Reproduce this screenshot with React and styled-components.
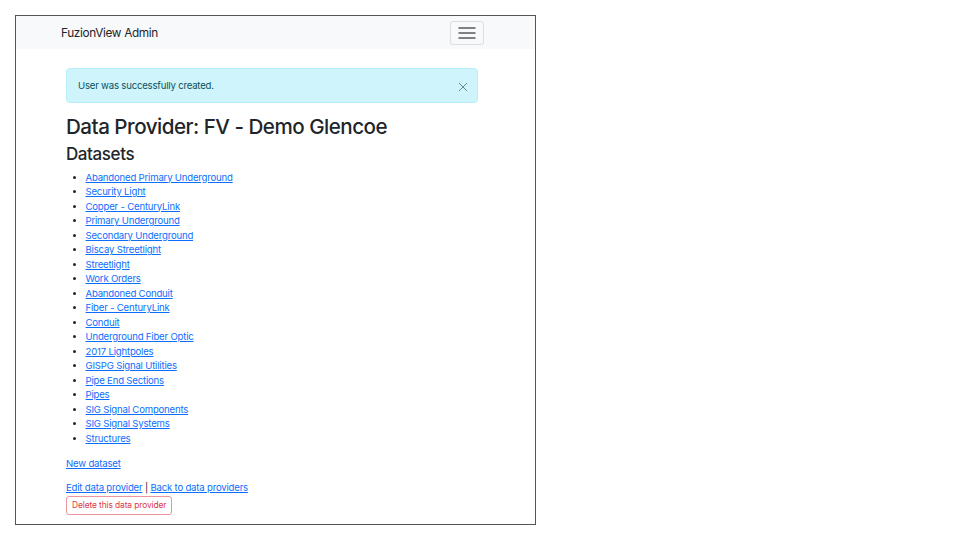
import React from 'react'
import styled, { createGlobalStyle } from 'styled-components'

const GlobalStyle = createGlobalStyle`
  body {
    margin: 0;
    background: #fff;
    font-family: Inter, "Liberation Sans", Arial, sans-serif;
    color: #212529;
  }
`

const Page = styled.div`
  padding: 15px;
`

const Frame = styled.div`
  box-sizing: border-box;
  width: 521px;
  height: 510px;
  border: 1px solid #555;
  overflow: hidden;
`

const Navbar = styled.nav`
  height: 33px;
  background: #f8f9fa;
  display: flex;
  align-items: center;
  justify-content: space-between;
  padding: 0 51px 0 45px;
`

const Brand = styled.span`
  font-size: 11.8px;
  letter-spacing: -0.35px;
  color: #212529;
`

const Toggler = styled.button`
  width: 34px;
  height: 24px;
  border: 1px solid #dcdde0;
  border-radius: 3px;
  background: transparent;
  display: flex;
  align-items: center;
  justify-content: center;
  padding: 0;
`

const Content = styled.main`
  padding: 19px 0 0 50px;
  width: 412px;
  font-size: 9.6px;
  line-height: 14.5px;
  letter-spacing: -0.2px;
`

const Alert = styled.div`
  box-sizing: border-box;
  height: 35px;
  display: flex;
  align-items: center;
  justify-content: space-between;
  padding: 2px 6px 0 11px;
  background: #cff4fc;
  border: 1px solid #b6effb;
  border-radius: 4px;
  color: #055160;
`

const Close = styled.button`
  border: 0;
  background: transparent;
  padding: 0;
  width: 16px;
  height: 16px;
  display: flex;
  align-items: center;
  justify-content: center;
  opacity: 0.45;
`

const Title = styled.h1`
  margin: 11px 0 5px;
  font-size: 20.6px;
  line-height: 25px;
  font-weight: 500;
  letter-spacing: -0.5px;
`

const Subtitle = styled.h2`
  margin: 1px 0 5.5px;
  font-size: 17px;
  line-height: 21px;
  font-weight: 500;
  letter-spacing: -0.4px;
`

const List = styled.ul`
  margin: 0 0 11px;
  padding-left: 19.5px;
`

const Link = styled.a`
  color: #0d6efd;
  text-decoration: underline;
`

const Para = styled.p`
  margin: 0 0 ${p => (p.$last ? 0 : 9.6)}px;
`

const DangerButton = styled.button`
  display: block;
  box-sizing: border-box;
  height: 19px;
  padding: 0 5px;
  font-family: inherit;
  font-size: 8.4px;
  letter-spacing: -0.1px;
  color: #dc3545;
  background: #fff;
  border: 1px solid #eb959d;
  border-radius: 3px;
`

const datasets = [
  'Abandoned Primary Underground',
  'Security Light',
  'Copper - CenturyLink',
  'Primary Underground',
  'Secondary Underground',
  'Biscay Streetlight',
  'Streetlight',
  'Work Orders',
  'Abandoned Conduit',
  'Fiber - CenturyLink',
  'Conduit',
  'Underground Fiber Optic',
  '2017 Lightpoles',
  'GISPG Signal Utilities',
  'Pipe End Sections',
  'Pipes',
  'SIG Signal Components',
  'SIG Signal Systems',
  'Structures',
]

const App = () => (
  <Page>
    <GlobalStyle />
    <Frame>
      <Navbar>
        <Brand>FuzionView Admin</Brand>
        <Toggler aria-label="Toggle navigation">
          <svg width="18" height="14" viewBox="0 0 18 14">
            <path
              d="M1 2h16M1 7h16M1 12h16"
              stroke="rgba(33,37,41,0.75)"
              strokeWidth="1.4"
              strokeLinecap="round"
            />
          </svg>
        </Toggler>
      </Navbar>
      <Content>
        <Alert>
          <span>User was successfully created.</span>
          <Close aria-label="Close">
            <svg width="10" height="10" viewBox="0 0 10 10">
              <path d="M1 1l8 8M9 1l-8 8" stroke="#000" strokeWidth="1" />
            </svg>
          </Close>
        </Alert>
        <Title>Data Provider: FV - Demo Glencoe</Title>
        <Subtitle>Datasets</Subtitle>
        <List>
          {datasets.map(name => (
            <li key={name}>
              <Link href="#">{name}</Link>
            </li>
          ))}
        </List>
        <Para>
          <Link href="#">New dataset</Link>
        </Para>
        <Para $last>
          <Link href="#">Edit data provider</Link> | <Link href="#">Back to data providers</Link>
        </Para>
        <DangerButton>Delete this data provider</DangerButton>
      </Content>
    </Frame>
  </Page>
)

export default App
